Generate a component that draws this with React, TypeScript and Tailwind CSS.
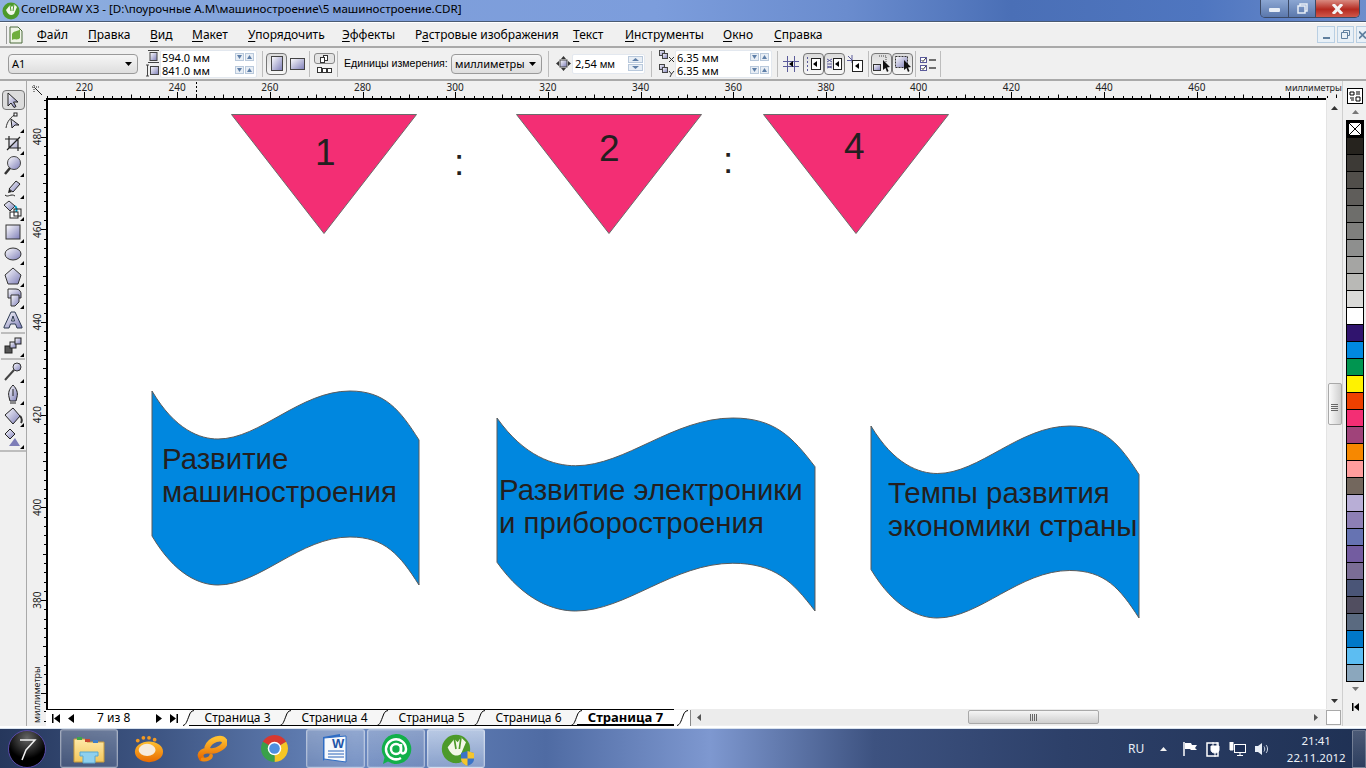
import type { ReactNode } from 'react'

const uiFont = "font-['Noto_Sans','Liberation_Sans',sans-serif]"
const arial = "font-['Liberation_Sans',Arial,sans-serif]"

const menuItems = [
  { pre: '', key: 'Ф', rest: 'айл', w: 'w-[51px]' },
  { pre: '', key: 'П', rest: 'равка', w: 'w-[62px]' },
  { pre: '', key: 'В', rest: 'ид', w: 'w-[42px]' },
  { pre: '', key: 'М', rest: 'акет', w: 'w-[56px]' },
  { pre: '', key: 'У', rest: 'порядочить', w: 'w-[94px]' },
  { pre: '', key: 'Э', rest: 'ффекты', w: 'w-[73px]' },
  { pre: 'Р', key: 'а', rest: 'стровые изображения', w: 'w-[158px]' },
  { pre: '', key: 'Т', rest: 'екст', w: 'w-[52px]' },
  { pre: '', key: 'И', rest: 'нструменты', w: 'w-[98px]' },
  { pre: '', key: 'О', rest: 'кно', w: 'w-[51px]' },
  { pre: '', key: 'С', rest: 'правка', w: 'w-[60px]' },
]

const swatches = [
  '#26231e', '#3d3a36', '#514e4a', '#5f5d5a', '#6e6e6b', '#7f7f7d', '#8e8f8e', '#a5a5a3',
  '#b9b9b6', '#dadad8', '#ffffff', '#30146e', '#0088e0', '#009550', '#fff200', '#ee4000',
  '#f32e74', '#a0437a', '#f78800', '#ff9d9d', '#73675d', '#b8aed6', '#8d7fb5', '#6673b2',
  '#735ca0', '#7b6d95', '#4a5577', '#514e60', '#5a6a80', '#0078c8', '#5cbdf2', '#8ba7bd',
]

const Defs = () => (
  <svg className="absolute h-0 w-0">
    <defs>
      <linearGradient id="lav" x1="0" y1="0" x2="1" y2="1">
        <stop offset="0" stopColor="#ffffff" />
        <stop offset="1" stopColor="#7d7db8" />
      </linearGradient>
      <linearGradient id="orange" x1="0" y1="0" x2="0" y2="1">
        <stop offset="0" stopColor="#ffc030" />
        <stop offset="1" stopColor="#e86a00" />
      </linearGradient>
      <linearGradient id="glass" x1="0" y1="0" x2="0" y2="1">
        <stop offset="0" stopColor="#ffe9a8" />
        <stop offset="1" stopColor="#f2c65c" />
      </linearGradient>
    </defs>
  </svg>
)

const Ico = ({ children, size = 22, flyout = false }: { children: ReactNode; size?: number; flyout?: boolean }) => (
  <svg width={size} height={size} viewBox="0 0 22 22" className="shrink-0">
    {children}
    {flyout && <path d="M18 22 L22 18 L22 22 Z" fill="#000" />}
  </svg>
)

const Spin = ({ up = false }: { up?: boolean }) => (
  <span className="flex h-[8px] w-[9px] items-center justify-center border border-[#b9c9dc] bg-[#e8eef5]">
    <svg width="5" height="4" viewBox="0 0 5 4">
      <path d={up ? 'M0 4 L2.5 0 L5 4 Z' : 'M0 0 L5 0 L2.5 4 Z'} fill="#5f7fa8" />
    </svg>
  </span>
)

const Sep = ({ className }: { className: string }) => <div className={`h-[26px] w-px shrink-0 bg-[#bdbdbd] ${className}`} />

const ValueRow = ({ value }: { value: string }) => (
  <div className="flex h-[13px] items-center justify-between pl-[1px] pr-[2px]">
    <span className="text-[11px] leading-none text-black">{value}</span>
    <span className="flex gap-[1px]">
      <Spin />
      <Spin up />
    </span>
  </div>
)

const ValuePair = ({ a, b, w }: { a: string; b: string; w: string }) => (
  <div className={`flex h-[28px] flex-col justify-center rounded-[2px] border border-[#e3e8ef] bg-white ${w}`}>
    <ValueRow value={a} />
    <ValueRow value={b} />
  </div>
)

const Pressed = ({ children, className = '' }: { children: ReactNode; className?: string }) => (
  <div className={`flex h-[22px] w-[21px] shrink-0 items-center justify-center rounded-[4px] border border-[#777] bg-[linear-gradient(#dcdcdc,#f7f7f7)] ${className}`}>
    {children}
  </div>
)

const DropDown = ({ label, w, className = '' }: { label: string; w: string; className?: string }) => (
  <div className={`flex h-[20px] shrink-0 items-center justify-between rounded-[4px] border border-[#9a9a9a] bg-[linear-gradient(#f6f6f6,#dedede)] pl-[3px] pr-[5px] ${w} ${className}`}>
    <span className="text-[11px] leading-none text-black">{label}</span>
    <svg width="7" height="4" viewBox="0 0 7 4">
      <path d="M0 0 L7 0 L3.5 4 Z" fill="#000" />
    </svg>
  </div>
)

const Menu = () => (
  <div className="flex h-[26px] shrink-0 items-center border-b-2 border-t border-b-[#a9a9a9] border-t-white bg-[#f0f0f0] pl-[6px]">
    <div className="h-[18px] w-px bg-[#9a9a9a]" />
    <div className="ml-[2px] w-[28px]">
      <svg width="14" height="18" viewBox="0 0 14 18">
        <path d="M1 1 L9 1 L13 5 L13 17 L1 17 Z" fill="#eef4e6" stroke="#4d6b3c" />
        <path d="M3 8 C5 4,9 6,11 3 L11 12 C8 15,5 12,3 14 Z" fill="#6fae3c" />
      </svg>
    </div>
    {menuItems.map((m) => (
      <div key={m.rest} className={`text-[12px] leading-none text-black ${m.w}`}>
        {m.pre}
        <span className="underline underline-offset-2">{m.key}</span>
        {m.rest}
      </div>
    ))}
    <div className="ml-auto flex">
      <div className="flex h-[17px] w-[18px] items-center justify-center border border-[#b9cfe3] bg-[#e8f0f7]">
        <div className="mt-[6px] h-[2px] w-[7px] bg-[#5f7f9f]" />
      </div>
      <div className="ml-[2px] flex h-[17px] w-[17px] items-center justify-center border border-[#b9cfe3] bg-[#e8f0f7]">
        <svg width="9" height="9" viewBox="0 0 9 9" fill="none" stroke="#5f7f9f">
          <path d="M2.5 2.5 V0.5 H8.5 V5.5 H6.5 M0.5 2.5 H6.5 V8.5 H0.5 Z" />
        </svg>
      </div>
      <div className="ml-[2px] flex h-[17px] w-[10px] items-center justify-start border border-r-0 border-[#b9cfe3] bg-[#e8f0f7] pl-[2px]">
        <svg width="8" height="8" viewBox="0 0 8 8" stroke="#5f7f9f" strokeWidth="2">
          <path d="M0 0 L8 8 M8 0 L0 8" />
        </svg>
      </div>
    </div>
  </div>
)

const Toolbar = () => (
  <div className="flex h-[33px] shrink-0 items-center border-b-2 border-[#a9a9a9] bg-[#f0f0f0] pl-[8px]">
    <DropDown label="A1" w="w-[130px]" />
    <div className="ml-[8px] flex w-[14px] flex-col items-center gap-[1px]">
      <svg width="13" height="13" viewBox="0 0 13 13">
        <path d="M1 0.5 H12 M1 12.5 H12" stroke="#444" />
        <rect x="3" y="2.5" width="7" height="8" fill="url(#lav)" stroke="#444" />
      </svg>
      <svg width="14" height="13" viewBox="0 0 14 13">
        <path d="M1.5 1 V12 M0 1 H3 M0 12 H3" stroke="#444" />
        <rect x="4.5" y="2.5" width="8" height="8" fill="url(#lav)" stroke="#444" />
      </svg>
    </div>
    <ValuePair a="594.0 мм" b="841.0 мм" w="w-[97px]" />
    <Sep className="ml-[5px]" />
    <Pressed className="ml-[3px]">
      <svg width="12" height="15" viewBox="0 0 12 15">
        <rect x="0.5" y="0.5" width="11" height="14" fill="url(#lav)" stroke="#444" />
      </svg>
    </Pressed>
    <svg className="ml-[3px]" width="15" height="12" viewBox="0 0 15 12">
      <rect x="0.5" y="0.5" width="14" height="11" fill="url(#lav)" stroke="#444" />
    </svg>
    <Sep className="ml-[4px]" />
    <div className="ml-[3px] flex w-[22px] flex-col items-center gap-[2px]">
      <div className="flex h-[11px] w-[21px] items-center justify-center rounded-[3px] border border-[#888] bg-[#e4e4e4]">
        <svg width="11" height="8" viewBox="0 0 11 8" fill="#fff" stroke="#333">
          <rect x="4.5" y="0.5" width="4" height="5" />
          <rect x="1.5" y="2.5" width="4" height="5" />
        </svg>
      </div>
      <svg width="15" height="8" viewBox="0 0 15 8" fill="#fff" stroke="#333">
        <rect x="0.5" y="1.5" width="4" height="5" />
        <rect x="5.5" y="2.5" width="4" height="4" />
        <rect x="10.5" y="2.5" width="4" height="4" />
      </svg>
    </div>
    <Sep className="ml-[2px]" />
    <span className={`ml-[6px] w-[107px] whitespace-nowrap text-[10.6px] leading-none text-black ${arial}`}>Единицы измерения:</span>
    <DropDown label="миллиметры" w="w-[91px]" />
    <Sep className="ml-[6px]" />
    <svg className="ml-[7px]" width="15" height="15" viewBox="0 0 15 15">
      <path d="M7.5 0 L10 3 H5 Z M7.5 15 L10 12 H5 Z M0 7.5 L3 5 V10 Z M15 7.5 L12 5 V10 Z" fill="#333" />
      <rect x="4" y="4" width="7" height="7" fill="url(#lav)" stroke="#444" />
    </svg>
    <div className="ml-[1px] flex h-[20px] w-[73px] items-center justify-between rounded-[2px] border border-[#e3e8ef] bg-white pl-[2px] pr-[1px]">
      <span className="text-[11px] leading-none text-black">
        2,54 <span className="text-[10px]">мм</span>
      </span>
      <span className="flex flex-col gap-[1px]">
        <span className="flex h-[7px] w-[15px] items-center justify-center border border-[#b9c9dc] bg-[#e8eef5]">
          <svg width="7" height="3" viewBox="0 0 7 3">
            <path d="M0 3 L3.5 0 L7 3 Z" fill="#5f7fa8" />
          </svg>
        </span>
        <span className="flex h-[7px] w-[15px] items-center justify-center border border-[#b9c9dc] bg-[#e8eef5]">
          <svg width="7" height="3" viewBox="0 0 7 3">
            <path d="M0 0 L7 0 L3.5 3 Z" fill="#5f7fa8" />
          </svg>
        </span>
      </span>
    </div>
    <Sep className="ml-[6px]" />
    <div className="ml-[7px] flex w-[16px] flex-col gap-[1px]">
      <svg width="16" height="13" viewBox="0 0 16 13">
        <rect x="0.5" y="0.5" width="5" height="5" fill="url(#lav)" stroke="#444" />
        <rect x="3.5" y="3.5" width="5" height="5" fill="url(#lav)" stroke="#444" />
        <path d="M10 7 L15 12 M15 7 L10 12" stroke="#333" />
      </svg>
      <svg width="16" height="13" viewBox="0 0 16 13">
        <rect x="0.5" y="0.5" width="5" height="5" fill="url(#lav)" stroke="#444" />
        <rect x="3.5" y="3.5" width="5" height="5" fill="url(#lav)" stroke="#444" />
        <path d="M10 7 L12.5 10 L15 7 M12.5 10 L11 13" stroke="#333" fill="none" />
      </svg>
    </div>
    <ValuePair a="6.35 мм" b="6.35 мм" w="w-[97px]" />
    <Sep className="ml-[5px]" />
    <svg className="ml-[5px]" width="16" height="16" viewBox="0 0 16 16">
      <path d="M0 5.5 H16 M0 10.5 H16 M4.5 0 V16 M11.5 0 V16" stroke="#5a5a9a" />
      <path d="M10 5 L6 8 L10 11 Z" fill="#000" />
    </svg>
    <Pressed className="ml-[4px]">
      <svg width="16" height="16" viewBox="0 0 16 16">
        <path d="M1.5 1 V15" stroke="#5a5a9a" strokeDasharray="2 2" />
        <rect x="5.5" y="2.5" width="9" height="11" fill="#fff" stroke="#222" />
        <path d="M11 5 L7 8 L11 11 Z" fill="#000" />
      </svg>
    </Pressed>
    <Pressed>
      <svg width="16" height="16" viewBox="0 0 16 16">
        <path d="M0 3 L5 6 M5 3 L0 6 M0 8 H5 M0 12 L5 10 M5 12 L0 10" stroke="#5a5a9a" />
        <rect x="6.5" y="2.5" width="8" height="11" fill="#fff" stroke="#222" />
        <path d="M12 5 L8 8 L12 11 Z" fill="#000" />
      </svg>
    </Pressed>
    <svg className="ml-[2px]" width="17" height="17" viewBox="0 0 17 17">
      <path d="M1 1 L6 6 M0 5.5 H16 M5 0 V8" stroke="#5a5a9a" />
      <rect x="5.5" y="5.5" width="10" height="11" fill="#fff" stroke="#222" />
      <path d="M12 8 L8 11 L12 14 Z" fill="#000" />
    </svg>
    <Sep className="ml-[4px]" />
    <Pressed className="ml-[2px]">
      <svg width="18" height="18" viewBox="0 0 18 18">
        <path d="M6 1 H13 V7" stroke="#444" strokeDasharray="1 1" fill="none" />
        <rect x="0.5" y="9.5" width="7" height="6" fill="url(#lav)" stroke="#333" />
        <path d="M10 5 V15 L12.5 13 L14 17 L15.5 16 L14 12.5 L17 12 Z" fill="#111" />
      </svg>
    </Pressed>
    <Pressed>
      <svg width="18" height="18" viewBox="0 0 18 18">
        <rect x="1.5" y="1.5" width="12" height="11" fill="url(#lav)" stroke="#333" strokeDasharray="2 1" />
        <path d="M10 5 V15 L12.5 13 L14 17 L15.5 16 L14 12.5 L17 12 Z" fill="#111" />
      </svg>
    </Pressed>
    <Sep className="ml-[2px]" />
    <svg className="ml-[4px]" width="16" height="16" viewBox="0 0 16 16">
      <rect x="0.5" y="1.5" width="6" height="5" fill="#fff" stroke="#5a5a9a" />
      <rect x="0.5" y="9.5" width="6" height="5" fill="#fff" stroke="#5a5a9a" />
      <path d="M1.5 4 L3 5.5 L6 2 M1.5 12 L3 13.5 L6 10" stroke="#333" fill="none" />
      <path d="M9 4 H16 M9 12 H16" stroke="#444" strokeWidth="1.5" />
    </svg>
    <Sep className="ml-[4px]" />
  </div>
)

const toolRows: { id: string; flyout?: boolean; draw: ReactNode }[] = [
  { id: 'shape', flyout: true, draw: <><path d="M4 17 C5 10,9 6,14 3" stroke="#333" fill="none" /><path d="M9 8 L10 17 L13 14 L17 14 Z" fill="url(#lav)" stroke="#222" /><rect x="12" y="2" width="3" height="3" fill="#fff" stroke="#222" /></> },
  { id: 'crop', flyout: true, draw: <><rect x="7" y="6" width="9" height="9" fill="url(#lav)" opacity=".6" /><path d="M7 3 V15 H19 M3 6 H16 V18 M5 17 L18 4" stroke="#222" strokeWidth="1.2" fill="none" /></> },
  { id: 'zoom', flyout: true, draw: <><circle cx="12" cy="8" r="6.5" fill="url(#lav)" stroke="#444" /><path d="M8 13 L3 19" stroke="#333" strokeWidth="2.5" /></> },
  { id: 'pen', flyout: true, draw: <><path d="M7 12 L14 4 L18 7 L11 15 Z" fill="url(#lav)" stroke="#222" /><path d="M7 12 L6 16 L10 15" fill="#222" /><path d="M3 18 C6 21,9 16,13 19" stroke="#222" fill="none" /></> },
  { id: 'smart', flyout: true, draw: <><path d="M2 6 L7 2 L13 7 L8 12 Z" fill="url(#lav)" stroke="#333" /><path d="M13 7 C15 9,15 11,14 13" stroke="#00a0c8" strokeWidth="2" fill="none" /><rect x="8" y="13" width="8" height="6" fill="#fff" stroke="#222" /><rect x="12" y="10" width="7" height="7" fill="none" stroke="#222" /></> },
  { id: 'rect', flyout: true, draw: <rect x="4" y="4" width="14" height="14" fill="url(#lav)" stroke="#333" /> },
  { id: 'ellipse', flyout: true, draw: <ellipse cx="11" cy="11" rx="8" ry="6" fill="url(#lav)" stroke="#333" /> },
  { id: 'polygon', flyout: true, draw: <path d="M11 3 L19 10 L16 19 L6 19 L3 10 Z" fill="url(#lav)" stroke="#333" /> },
  { id: 'basic', flyout: true, draw: <><path d="M6 2 H14 A5 5 0 0 1 19 8 V11 H6 Z" fill="url(#lav)" stroke="#333" /><path d="M9 8 H17 V15 L13 19 H9 Z" fill="url(#lav)" stroke="#333" /></> },
  { id: 'text', draw: <path d="M2 19 H7 L8.5 15 H13.5 L15 19 H20 V18 L13 3 H9 L2 18 Z M9.5 12 H12.5 L11 7 Z" fill="url(#lav)" stroke="#2c3a52" fillRule="evenodd" /> },
]

const toolRows2: { id: string; flyout?: boolean; draw: ReactNode }[] = [
  { id: 'eyedrop', flyout: true, draw: <><path d="M3 19 L12 9" stroke="#444" strokeWidth="2" /><circle cx="15" cy="6" r="4" fill="url(#lav)" stroke="#333" /></> },
  { id: 'outline', flyout: true, draw: <><path d="M11 2 C15 6,16 10,15 14 L14 18 H8 L7 14 C6 10,7 6,11 2 Z" fill="url(#lav)" stroke="#222" /><path d="M11 6 V13 M8 20 H14" stroke="#222" /></> },
  { id: 'fill', flyout: true, draw: <><path d="M3 10 L11 3 L18 11 L11 19 Z" fill="url(#lav)" stroke="#222" /><path d="M18 11 C20 13,20 16,19 18" stroke="#333" strokeWidth="2" fill="none" /></> },
  { id: 'interactive', flyout: true, draw: <><path d="M3 7 L8 2 L13 7 L8 12 Z" fill="url(#lav)" stroke="#222" /><path d="M7 19 L13 11 L18 19 Z" fill="#7d7db8" /></> },
]

const ToolSlot = ({ children }: { children: ReactNode }) => (
  <div className="flex h-[22px] w-full items-center justify-center">{children}</div>
)

const Toolbox = () => (
  <div className="flex w-[27px] shrink-0 flex-col border-r border-[#a9a9a9] bg-[#f0f0f0] pt-[8px]">
    <ToolSlot>
      <div className="flex h-[20px] w-[23px] items-center justify-center rounded-[4px] border border-[#777] bg-[#dcdcdc]">
        <svg width="14" height="16" viewBox="0 0 14 16">
          <path d="M2 1 V14 L5 11 L8 15.5 L10 14.5 L7.5 10 L12 10 Z" fill="url(#lav)" stroke="#222" />
        </svg>
      </div>
    </ToolSlot>
    {toolRows.map((t) => (
      <ToolSlot key={t.id}>
        <Ico flyout={t.flyout}>{t.draw}</Ico>
      </ToolSlot>
    ))}
    <div className="mx-[1px] my-[1px] h-[2px] bg-[#bdbdbd]" />
    <ToolSlot>
      <Ico flyout>
        <rect x="3" y="11" width="7" height="7" fill="#555" stroke="#222" />
        <rect x="8" y="7" width="6" height="6" fill="url(#lav)" stroke="#222" />
        <rect x="13" y="3" width="6" height="6" fill="url(#lav)" stroke="#222" />
      </Ico>
    </ToolSlot>
    <div className="mx-[1px] my-[1px] h-[2px] bg-[#bdbdbd]" />
    {toolRows2.map((t) => (
      <ToolSlot key={t.id}>
        <Ico flyout={t.flyout}>{t.draw}</Ico>
      </ToolSlot>
    ))}
    <div className="mt-[1px] h-[2px] bg-[#bdbdbd]" />
  </div>
)

// ruler scale: 46.35px on screen per 10 units, a tick every 2 units
const HRuler = () => {
  const step = 9.27
  const ticks = Array.from({ length: 142 }, (_, i) => i)
  const x0 = 84.4 - 46 - 4 * step
  return (
    <svg width="1296" height="17" viewBox="0 0 1296 17" className="block">
      {ticks.map((i) => {
        const x = Math.round(x0 + i * step) + 0.5
        const h = (i - 4) % 10 === 0 ? 6 : (i - 4) % 5 === 0 ? 3.5 : 2
        return <path key={i} d={`M${x} ${17 - h} V17`} stroke="#000" />
      })}
      {[220, 240, 260, 280, 300, 320, 340, 360, 380, 400, 420, 440, 460].map((n, i) => (
        <text key={n} x={x0 + 4 * step + i * 92.7} y="9.5" textAnchor="middle" fontSize="10" fill="#222" fontFamily="Noto Sans, sans-serif">
          {n}
        </text>
      ))}
      <text x="1239" y="9.5" fontSize="9" fill="#222" fontFamily="Noto Sans, sans-serif">миллиметры</text>
      <path d="M150.5 1 V17" stroke="#000" strokeDasharray="2 2" />
    </svg>
  )
}

const VRuler = () => {
  const step = 9.27
  const y0 = 136.6 - 98
  const ticks = Array.from({ length: 70 }, (_, i) => i - 4)
  return (
    <svg width="19" height="628" viewBox="0 0 19 628" className="block">
      {ticks.map((i) => {
        const y = Math.round(y0 + i * step) + 0.5
        const h = i % 10 === 0 ? 5 : i % 5 === 0 ? 3 : 2
        return <path key={i} d={`M${19 - h} ${y} H19`} stroke="#000" />
      })}
      {[480, 460, 440, 420, 400, 380].map((n, i) => (
        <text key={n} transform={`translate(14 ${y0 + i * 92.7}) rotate(-90)`} textAnchor="middle" fontSize="10" fill="#222" fontFamily="Noto Sans, sans-serif">
          {n}
        </text>
      ))}
      <text transform="translate(13 625) rotate(-90)" fontSize="9" fill="#222" fontFamily="Noto Sans, sans-serif">миллиметры</text>
    </svg>
  )
}

const Triangle = ({ className, label, labelClass }: { className: string; label: string; labelClass: string }) => (
  <div className={`absolute h-[120px] w-[186px] ${className}`}>
    <svg width="186" height="120" viewBox="0 0 186 120" className="block overflow-visible">
      <path d="M0.5 0.5 H185.5 L93 119.5 Z" fill="#f32e74" stroke="#6b6b6b" />
    </svg>
    <span className={`absolute text-[37px] leading-none text-[#231f20] ${arial} ${labelClass}`}>{label}</span>
  </div>
)

const Wave = ({ className, lines, textClass }: { className: string; lines: string[]; textClass: string }) => (
  <div className={`absolute ${className}`}>
    <svg viewBox="0 0 267 194" preserveAspectRatio="none" className="block h-full w-full overflow-visible">
      <path
        d="M0 0 C23 39,48 48,66 48 C108 48,148 0,198 0 C233 0,248 19,267 49 L267 194 C248 164,233 146,198 146 C148 146,108 194,66 194 C48 194,23 184,0 145 Z"
        fill="#0087df"
        stroke="#5b5b5b"
        vectorEffect="non-scaling-stroke"
      />
    </svg>
    <div className={`absolute whitespace-nowrap text-[29.4px] leading-[33px] text-[#231f20] ${arial} ${textClass}`}>
      {lines.map((l) => (
        <div key={l}>{l}</div>
      ))}
    </div>
  </div>
)

const Canvas = () => (
  <div className="relative flex-1 overflow-hidden border-l-2 border-t-2 border-black bg-white">
    <Triangle className="left-[183px] top-[14px]" label="1" labelClass="left-[84px] top-[20px]" />
    <span className={`absolute left-[406px] top-[44px] text-[37px] leading-none text-[#231f20] ${arial}`}>:</span>
    <Triangle className="left-[468px] top-[14px]" label="2" labelClass="left-[83px] top-[16px]" />
    <span className={`absolute left-[675px] top-[42px] text-[37px] leading-none text-[#231f20] ${arial}`}>:</span>
    <Triangle className="left-[715px] top-[14px]" label="4" labelClass="left-[81px] top-[14px]" />
    <Wave className="left-[104px] top-[291px] h-[194px] w-[267px]" lines={['Развитие', 'машиностроения']} textClass="left-[10px] top-[51px]" />
    <Wave className="left-[449px] top-[318px] h-[193px] w-[318px]" lines={['Развитие электроники', 'и приборостроения']} textClass="left-[2px] top-[55px]" />
    <Wave className="left-[823px] top-[326px] h-[192px] w-[268px]" lines={['Темпы развития', 'экономики страны']} textClass="left-[17px] top-[50px]" />
  </div>
)

const VScroll = () => (
  <div className="flex w-[16px] shrink-0 flex-col items-center border-l border-[#e4e4e4] bg-[#f0f0f0] pt-[8px]">
    <svg width="7" height="4" viewBox="0 0 7 4">
      <path d="M0 4 L3.5 0 L7 4 Z" fill="#333" />
    </svg>
    <div className="mt-[273px] flex h-[42px] w-[14px] flex-col items-center justify-end gap-[1px] rounded-[2px] border border-[#a9a9a9] bg-[linear-gradient(90deg,#fafafa,#cfcfcf)] pb-[13px]">
      <div className="h-px w-[7px] bg-[#666]" />
      <div className="h-px w-[7px] bg-[#666]" />
      <div className="h-px w-[7px] bg-[#666]" />
      <div className="h-px w-[7px] bg-[#666]" />
    </div>
    <svg className="mb-[6px] mt-auto" width="7" height="4" viewBox="0 0 7 4">
      <path d="M0 0 L7 0 L3.5 4 Z" fill="#333" />
    </svg>
  </div>
)

const Palette = () => (
  <div className="flex w-[24px] shrink-0 flex-col items-center border-l border-[#cfcfcf] bg-[#f0f0f0] pl-[1px] pt-[7px]">
    <svg width="16" height="16" viewBox="0 0 16 16">
      <rect x="0.5" y="0.5" width="15" height="15" fill="#fff" stroke="#000" />
      <path d="M3 4 H7 M3 4 V7 H7 V4 M9 4 H13 M9 6 H13 M3 10 H7 M4 12 H7 M9 9 H13 V13 H9 Z" stroke="#000" fill="none" />
    </svg>
    <svg className="mt-[6px]" width="7" height="4" viewBox="0 0 7 4">
      <path d="M0 4 L3.5 0 L7 4 Z" fill="#777" />
    </svg>
    <div className="mt-[6px] flex w-[18px] flex-col bg-black pb-px">
      <div className="flex h-[17px] w-[18px] items-center justify-center">
        <svg width="12" height="12" viewBox="0 0 12 12">
          <rect width="12" height="12" fill="#fff" />
          <path d="M0 0 L12 12 M12 0 L0 12" stroke="#000" />
        </svg>
      </div>
      {swatches.map((c, i) => (
        <div key={i} className="h-[17px] w-[18px] border-x border-t border-black" style={{ backgroundColor: c }} />
      ))}
    </div>
    <svg className="mt-[5px]" width="7" height="4" viewBox="0 0 7 4">
      <path d="M0 0 L7 0 L3.5 4 Z" fill="#777" />
    </svg>
    <svg className="mt-[12px]" width="7" height="8" viewBox="0 0 7 8">
      <path d="M0 0 H1.5 V8 H0 Z M7 0 V8 L2 4 Z" fill="#000" />
    </svg>
  </div>
)

const Slash = ({ className }: { className: string }) => (
  <svg width="16" height="16" viewBox="0 0 16 16" className={`absolute top-0 ${className}`}>
    <path d="M1 15.5 C4 15,5 11,7 6 C8 3,9 1,12 0.5" stroke="#000" fill="none" />
  </svg>
)

const Tab = ({ label, active = false }: { label: string; active?: boolean }) => (
  <div
    className={`relative flex h-[16px] w-[97px] items-center justify-center leading-none text-black ${
      active ? 'border-b-2 border-black bg-white text-[13px] font-bold' : 'border-b border-black bg-[#f6f6f6] text-[12px]'
    }`}
  >
    <Slash className="-left-[7px]" />
    {label}
  </div>
)

const PageNav = () => (
  <div className="flex h-[16px] w-[143px] shrink-0 items-center bg-white pl-[5px]">
    <svg width="8" height="9" viewBox="0 0 8 9" className="ml-[1px]">
      <path d="M0 0 H1.5 V9 H0 Z M8 0 V9 L2 4.5 Z" fill="#000" />
    </svg>
    <svg width="6" height="9" viewBox="0 0 6 9" className="ml-[8px]">
      <path d="M6 0 V9 L0 4.5 Z" fill="#000" />
    </svg>
    <span className="ml-[23px] w-[59px] text-[12px] leading-none text-black">7 из 8</span>
    <svg width="6" height="9" viewBox="0 0 6 9">
      <path d="M0 0 V9 L6 4.5 Z" fill="#000" />
    </svg>
    <svg width="8" height="9" viewBox="0 0 8 9" className="ml-[8px]">
      <path d="M0 0 V9 L6 4.5 Z M6.5 0 H8 V9 H6.5 Z" fill="#000" />
    </svg>
  </div>
)

const BottomBar = () => (
  <div className="flex h-[17px] shrink-0 items-start bg-[#f0f0f0]">
    <div className="flex h-[17px] items-start border-t border-black bg-white">
      <PageNav />
      <Tab label="Страница 3" />
      <Tab label="Страница 4" />
      <Tab label="Страница 5" />
      <Tab label="Страница 6" />
      <Tab label="Страница 7" active />
    </div>
    <div className="relative mt-px h-[16px] w-[17px] border-r border-[#888] bg-white">
      <Slash className="left-[2px]" />
    </div>
    <div className="flex h-[16px] w-[629px] items-center bg-[#ececec] pl-[6px]">
      <svg width="4" height="7" viewBox="0 0 4 7">
        <path d="M4 0 V7 L0 3.5 Z" fill="#555" />
      </svg>
      <div className="ml-[267px] flex h-[14px] w-[131px] items-center justify-center gap-[1px] rounded-[2px] border border-[#a9a9a9] bg-[linear-gradient(#f5f5f5,#cfcfcf)]">
        <div className="h-[7px] w-px bg-[#666]" />
        <div className="h-[7px] w-px bg-[#666]" />
        <div className="h-[7px] w-px bg-[#666]" />
        <div className="h-[7px] w-px bg-[#666]" />
      </div>
      <svg className="ml-auto mr-[2px]" width="4" height="7" viewBox="0 0 4 7">
        <path d="M0 0 V7 L4 3.5 Z" fill="#555" />
      </svg>
    </div>
    <div className="ml-[6px] mt-[1px] h-[15px] w-[15px] border border-[#a9a9a9] bg-white" />
  </div>
)

const CorelLogo = ({ size = 18 }: { size?: number }) => (
  <svg width={size} height={size} viewBox="0 0 18 18">
    <circle cx="9" cy="9" r="8.5" fill="#4c9a2a" />
    <path d="M4 8 L8 3 L10 5 L12 2 L15 5 L12 12 C9 14,6 13,4 8 Z" fill="#f2f7e8" />
    <path d="M8 3 L9 9 M12 2 L11 9" stroke="#4c9a2a" />
  </svg>
)

const TaskBtn = ({ children, w = 'w-[58px]', bright = false }: { children: ReactNode; w?: string; bright?: boolean }) => (
  <div
    className={`flex h-[39px] shrink-0 items-center justify-center rounded-[3px] border border-[#ffffff66] shadow-[inset_0_0_0_1px_#ffffff22] ${w} ${
      bright ? 'bg-[linear-gradient(#cfdcf0cc,#9fb4d8aa)]' : 'bg-[linear-gradient(#ffffff44,#ffffff1a)]'
    }`}
  >
    {children}
  </div>
)

const Taskbar = () => (
  <div className="flex h-[40px] shrink-0 items-center border-t border-[#d8e2ee] bg-[linear-gradient(90deg,#26375c_0%,#3f5785_12%,#6a88bf_26%,#4f6ba3_40%,#7e98d0_52%,#3d5280_64%,#2d4069_78%,#1f3154_100%)]">
    <div className="ml-[8px] flex h-[38px] w-[38px] shrink-0 items-center justify-center rounded-full border border-[#5a4aa8] bg-[radial-gradient(circle_at_50%_20%,#666,#000_60%)]">
      <svg width="24" height="26" viewBox="0 0 24 26" fill="none">
        <path d="M5 4 H20 L11 14 L7 24" stroke="#f2f2f2" strokeWidth="1.5" />
      </svg>
    </div>
    <div className="ml-[14px]">
      <TaskBtn>
        <svg width="32" height="30" viewBox="0 0 32 30">
          <path d="M1 5 H12 L14 8 H31 V28 H1 Z" fill="url(#glass)" stroke="#c79a3a" />
          <rect x="4" y="3" width="5" height="3" fill="#3fa34d" />
          <rect x="12" y="5" width="5" height="3" fill="#c8452f" />
          <rect x="20" y="6" width="5" height="3" fill="#3f7fc8" />
          <path d="M7 18 H25 V22 H22 V29 H10 V22 H7 Z" fill="#8fd0ee" stroke="#5aa8d0" />
        </svg>
      </TaskBtn>
    </div>
    <div className="ml-[16px] flex w-[30px] shrink-0 items-center justify-center">
      <svg width="32" height="30" viewBox="0 0 32 30">
        <ellipse cx="16" cy="18" rx="15" ry="11" fill="url(#orange)" />
        <ellipse cx="14" cy="16" rx="9" ry="6.5" fill="#f6ebdc" />
        <circle cx="4" cy="6" r="2" fill="#f59a20" />
        <circle cx="10" cy="3" r="2" fill="#f59a20" />
        <circle cx="16" cy="3" r="2" fill="#f59a20" />
        <circle cx="22" cy="5" r="2" fill="#f59a20" />
      </svg>
    </div>
    <div className="ml-[33px] flex w-[30px] shrink-0 items-center justify-center">
      <svg width="32" height="28" viewBox="0 0 32 28" fill="none">
        <path d="M5 24 C1 18,8 15,14 16 C22 17,32 10,29 5 C26 1,15 3,11 12" stroke="url(#orange)" strokeWidth="6" strokeLinecap="round" />
        <path d="M6 25 C10 26,15 24,15 21" stroke="#ef8a12" strokeWidth="4" strokeLinecap="round" />
      </svg>
    </div>
    <div className="ml-[32px] flex w-[30px] shrink-0 items-center justify-center">
      <svg width="29" height="29" viewBox="0 0 30 30">
        <path d="M15 15 L2.9 8 A14 14 0 0 1 27.1 8 Z" fill="#d8382f" />
        <path d="M15 15 L27.1 8 A14 14 0 0 1 15 29 Z" fill="#f6c624" />
        <path d="M15 15 L15 29 A14 14 0 0 1 2.9 8 Z" fill="#3aa04a" />
        <circle cx="15" cy="15" r="7" fill="#fff" />
        <circle cx="15" cy="15" r="5.5" fill="#4f8fe0" />
      </svg>
    </div>
    <div className="ml-[17px]">
      <TaskBtn w="w-[59px]">
        <svg width="32" height="32" viewBox="0 0 32 32">
          <path d="M3 4 L20 1 V8 L3 28 Z" fill="#2e6cc4" />
          <path d="M4 5 L26 3 V29 L4 26 Z" fill="#f7f9fc" stroke="#2e6cc4" />
          <text x="12" y="15" fontSize="13" fontWeight="700" fill="#1f55a8" fontFamily="Liberation Sans, sans-serif">W</text>
          <path d="M8 18 H24 M8 21 H24 M8 24 H24" stroke="#2b63b8" />
        </svg>
      </TaskBtn>
    </div>
    <div className="ml-[2px]">
      <TaskBtn w="w-[58px]">
        <svg width="32" height="32" viewBox="0 0 32 32">
          <path d="M16 1 A15 15 0 1 1 8 28.5 L3 31 L4.5 24.5 A15 15 0 0 1 16 1 Z" fill="#12b04a" />
          <circle cx="16" cy="16" r="5" fill="none" stroke="#fff" strokeWidth="2.5" />
          <path d="M21 11 V18 C21 22,26 21,26 16 A10 10 0 1 0 21 25" fill="none" stroke="#fff" strokeWidth="2.5" />
        </svg>
      </TaskBtn>
    </div>
    <div className="ml-[2px]">
      <TaskBtn bright>
        <div className="relative">
          <CorelLogo size={30} />
          <svg width="13" height="15" viewBox="0 0 13 15" className="absolute -bottom-[2px] -right-[3px]">
            <path d="M6.5 0 L13 2 V8 C13 12,9 14,6.5 15 C4 14,0 12,0 8 V2 Z" fill="#3a73c8" />
            <path d="M6.5 0 L13 2 V7.5 H6.5 Z M0 7.5 H6.5 V15 C4 14,0 12,0 7.5 Z" fill="#f5c52d" />
          </svg>
        </div>
      </TaskBtn>
    </div>
    <span className={`ml-[643px] text-[12px] leading-none text-[#e8eef6] ${uiFont}`}>RU</span>
    <svg className="ml-[16px]" width="7" height="4" viewBox="0 0 7 4">
      <path d="M0 4 L3.5 0 L7 4 Z" fill="#f2f2f2" />
    </svg>
    <svg className="ml-[15px]" width="16" height="16" viewBox="0 0 16 16">
      <path d="M2 1 V15" stroke="#fff" strokeWidth="1.5" />
      <path d="M3 2 H9 L10 4 H15 L13 7 L15 9 H9 L8 8 H3 Z" fill="#fff" />
    </svg>
    <svg className="ml-[8px]" width="16" height="18" viewBox="0 0 16 18">
      <rect x="1" y="3" width="11" height="13" fill="#1d2f55" stroke="#fff" strokeWidth="1.5" />
      <path d="M7 2 V6 M11 2 V6 M5 6 H13 V10 C13 12,11 13,9 13 C7 13,5 12,5 10 Z M9 13 V17" stroke="#fff" fill="#fff" />
    </svg>
    <svg className="ml-[7px]" width="18" height="16" viewBox="0 0 18 16">
      <path d="M1 1 V9 H4 V1" stroke="#fff" fill="#fff" />
      <rect x="5.5" y="3.5" width="11" height="8" fill="#1d2f55" stroke="#fff" />
      <path d="M8 14.5 H14 M11 12 V14" stroke="#fff" />
    </svg>
    <svg className="ml-[7px]" width="16" height="16" viewBox="0 0 16 16" fill="none">
      <path d="M1 5 H4 L8 2 V14 L4 11 H1 Z" fill="#e8eef6" />
      <path d="M10 5.5 C11 7,11 9,10 10.5 M12 4 C14 6,14 10,12 12" stroke="#cfd9e6" />
    </svg>
    <div className="ml-[13px] mt-px flex w-[66px] flex-col items-center gap-[5px] text-[11.5px] leading-none text-[#eef2f8]">
      <span className={uiFont}>21:41</span>
      <span className={uiFont}>22.11.2012</span>
    </div>
    <div className="ml-auto h-[38px] w-[14px] rounded-[1px] border border-[#ffffff44] bg-[linear-gradient(#ffffff33,#ffffff11)]" />
  </div>
)

export default function App() {
  return (
    <div className={`flex h-[768px] w-[1366px] flex-col overflow-hidden bg-[#f0f0f0] ${uiFont}`}>
      <Defs />
      <div className="flex h-[22px] shrink-0 items-start border-b border-[#4a5a72] bg-[linear-gradient(90deg,#8fb0e0_0%,#7f9fda_25%,#7c9ddc_48%,#6a8cce_62%,#4a6fb6_74%,#4f76c0_88%,#6e8ecc_100%)] pl-[2px]">
        <div className="mt-[2px]">
          <CorelLogo />
        </div>
        <span className="ml-[1px] mt-[3px] text-[11.6px] leading-none text-black">
          CorelDRAW X3 - [D:\поурочные А.М\машиностроение\5 машиностроение.CDR]
        </span>
        <div className="ml-auto mr-[6px] flex h-[18px] w-[100px] overflow-hidden rounded-b-[5px] border border-t-0 border-[#3c4a66]">
          <div className="flex w-[28px] items-center justify-center border-r border-[#3c4a66] bg-[linear-gradient(#8ba6d2,#5b78ac)]">
            <div className="mt-[2px] h-[4px] w-[11px] rounded-[1px] bg-[#e8eef6]" />
          </div>
          <div className="flex w-[27px] items-center justify-center border-r border-[#3c4a66] bg-[linear-gradient(#8ba6d2,#5b78ac)]">
            <svg width="11" height="11" viewBox="0 0 11 11" fill="none" stroke="#e8eef6" strokeWidth="1.5">
              <path d="M3 3 V1 H10 V8 H8 M1 3 H8 V10 H1 Z" />
            </svg>
          </div>
          <div className="flex flex-1 items-center justify-center bg-[linear-gradient(#d98a80,#b52a20_55%,#d0584a)]">
            <svg width="11" height="10" viewBox="0 0 11 10" stroke="#f4f4f4" strokeWidth="3">
              <path d="M1 0 L10 10 M10 0 L1 10" />
            </svg>
          </div>
        </div>
      </div>
      <Menu />
      <Toolbar />
      <div className="flex min-h-0 flex-1">
        <Toolbox />
        <div className="flex min-w-0 flex-1 flex-col">
          <div className="flex h-[17px] shrink-0">
            <div className="flex w-[19px] shrink-0 items-center justify-center">
              <svg width="12" height="12" viewBox="0 0 12 12" stroke="#222" fill="none">
                <path d="M1 3 H9 M3 1 V9" strokeDasharray="1 1" />
                <path d="M4 4 L11 11" />
              </svg>
            </div>
            <div className="min-w-0 flex-1 overflow-hidden">
              <HRuler />
            </div>
          </div>
          <div className="flex min-h-0 flex-1">
            <div className="w-[19px] shrink-0 overflow-hidden">
              <VRuler />
            </div>
            <div className="flex min-w-0 flex-1 flex-col">
              <div className="flex min-h-0 flex-1">
                <Canvas />
                <VScroll />
              </div>
              <BottomBar />
            </div>
          </div>
        </div>
        <Palette />
      </div>
      <div className="h-[2px] shrink-0 bg-white" />
      <Taskbar />
    </div>
  )
}
